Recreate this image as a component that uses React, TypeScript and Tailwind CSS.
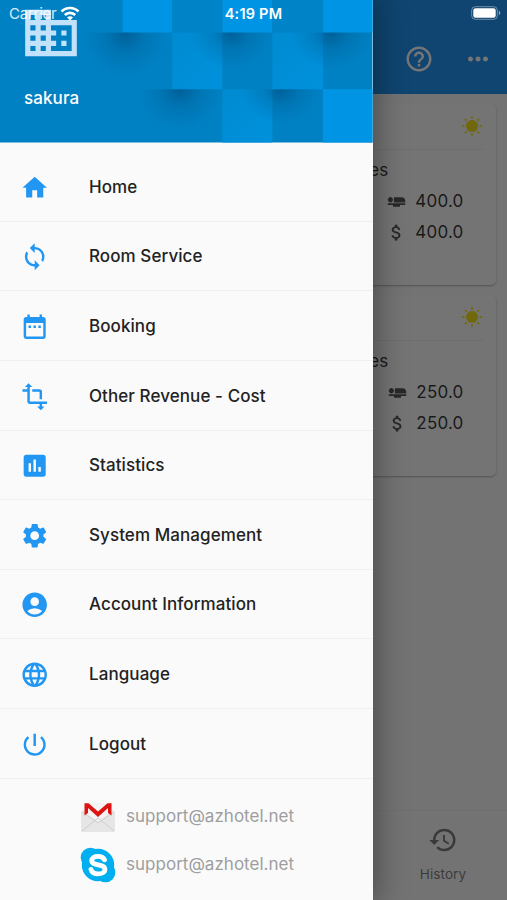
import type { IconType } from "react-icons";
import {
  MdAccountCircle,
  MdAirlineSeatFlat,
  MdAssessment,
  MdAttachMoney,
  MdBusiness,
  MdDateRange,
  MdHelpOutline,
  MdHistory,
  MdHome,
  MdLanguage,
  MdMoreHoriz,
  MdPowerSettingsNew,
  MdSettings,
  MdSync,
  MdTransform,
} from "react-icons/md";

const menu: { label: string; icon: IconType }[] = [
  { label: "Home", icon: MdHome },
  { label: "Room Service", icon: MdSync },
  { label: "Booking", icon: MdDateRange },
  { label: "Other Revenue - Cost", icon: MdTransform },
  { label: "Statistics", icon: MdAssessment },
  { label: "System Management", icon: MdSettings },
  { label: "Account Information", icon: MdAccountCircle },
  { label: "Language", icon: MdLanguage },
  { label: "Logout", icon: MdPowerSettingsNew },
];

function Sun() {
  return (
    <svg viewBox="-12 -12 24 24" className="h-6 w-6" fill="#f7e01a">
      <circle r="6" />
      {[0, 45, 90, 135, 180, 225, 270, 315].map((a) => (
        <path key={a} d="M-1.3 -7.6h2.6L0 -11Z" transform={`rotate(${a})`} />
      ))}
    </svg>
  );
}

function GmailLogo() {
  return (
    <svg viewBox="0 0 34 32" className="h-8 w-[34px]">
      <path d="M0 11 3 8h28l3 3v18a2 2 0 0 1-2 2H2a2 2 0 0 1-2-2Z" fill="#e9e9e9" />
      <path d="M3 2h28v9L17 20 3 11Z" fill="#f4f4f4" />
      <path d="m0 11 17 12 17-12v18a2 2 0 0 1-2 2H2a2 2 0 0 1-2-2Z" fill="#e6e6e6" />
      <path d="M1 30 17 17l16 13M1 11l16 11 16-11" fill="none" stroke="#cdcdcd" strokeWidth="1" />
      <path d="M3.5 14.5V2.2h4L17 10.600l9.500-8.400h4v12.300L27 12V7l-10 9L7 7v5Z" fill="#dd1512" />
    </svg>
  );
}

function SkypeLogo() {
  return (
    <svg viewBox="0 0 36 36" className="h-9 w-9">
      <g fill="#00aff0">
        <circle cx="18" cy="18" r="16.200" />
        <circle cx="10.500" cy="10.500" r="9.800" />
        <circle cx="25.500" cy="25.500" r="9.800" />
      </g>
      <path
        d="M24.500 12.800C23.500 10.200 21.300 9.300 18 9.300c-3.600 0-6.300 1.500-6.300 4.300 0 6 13.200 2.600 13.200 8.800 0 3-3 4.500-6.900 4.500-4 0-6.200-1.500-7-4.500"
        fill="none"
        stroke="#fff"
        strokeWidth="4.800"
        strokeLinecap="round"
      />
    </svg>
  );
}

function HeaderArt() {
  return (
    <svg
      viewBox="0 0 372 142"
      preserveAspectRatio="none"
      className="absolute inset-0 h-full w-full"
    >
      <defs>
        <radialGradient id="shade" cx="0.5" cy="0" r="1" gradientTransform="translate(.25 0) scale(.5 1)">
          <stop offset="0" stopColor="#004a7c" stopOpacity="0.6" />
          <stop offset="0.45" stopColor="#004a7c" stopOpacity="0.22" />
          <stop offset="1" stopColor="#004a7c" stopOpacity="0" />
        </radialGradient>
        <linearGradient id="mid" x1="0" y1="0" x2="1" y2="1">
          <stop offset="0" stopColor="#008bd1" />
          <stop offset="1" stopColor="#0091dc" />
        </linearGradient>
      </defs>
      <path d="M0 0h372v142H0Z" fill="#0081c3" />
      <path d="M122.500 0h49.500v32.500h-49.500ZM222 0h50v32.500h-50ZM322.500 0H372v32.500h-49.500ZM322.500 89H372v53h-49.500Z" fill="#0095e4" />
      <path d="M172 0h50v32.500h-50ZM272 0h50.500v32.500H272Z" fill="#0084c7" />
      <rect x="172" y="32.500" width="50" height="56.500" fill="url(#mid)" />
      <rect x="272" y="32.500" width="50.500" height="56.500" fill="url(#mid)" />
      <rect x="222" y="89" width="50" height="53" fill="url(#mid)" />
      <rect x="83" y="32.500" width="84" height="44" fill="url(#shade)" />
      <rect x="190" y="32.500" width="82" height="36" fill="url(#shade)" />
      <rect x="290" y="32.500" width="82" height="36" fill="url(#shade)" />
      <path d="M137 89h85v40h-85Z" fill="url(#shade)" />
      <rect x="240" y="89" width="80" height="34" fill="url(#shade)" />
    </svg>
  );
}

function RoomCard({ amount, className }: { amount: string; className: string }) {
  return (
    <section
      className={`mr-[11px] ml-2.5 rounded-[5px] bg-[#fdfdfd] shadow-[0_1px_2px_rgba(0,0,0,0.28)] ${className}`}
    >
      <div className="mr-3 ml-3 flex h-[46px] items-center justify-end border-b border-[#f0f0f0] pb-0.5">
        <Sun />
      </div>
      <div className="flex flex-col items-end pr-[32.500px] text-[17px] leading-[31px] tracking-[0.2px] text-black/80">
        <div className="mt-[5px] mr-[75px]">Guest files</div>
        <div className="flex items-center">
          <MdAirlineSeatFlat className="mr-2 size-[21px] text-black/65" />
          {amount}
        </div>
        <div className="flex items-center">
          <MdAttachMoney className="mr-2 size-[21px] text-black/65" />
          {amount}
        </div>
      </div>
    </section>
  );
}

function StatusBar() {
  return (
    <div className="absolute inset-x-0 top-0 grid h-7 grid-cols-3 items-center pr-[6px] pl-[9px] text-[15px] text-white">
      <div className="flex items-center gap-1">
        <span className="tracking-[-0.25px] text-white/85">Carrier</span>
        <svg viewBox="0 0 20 15" className="mb-0.5 h-[15px] w-5" fill="none" stroke="#fff" strokeWidth="2.600">
          <path d="M1.500 5.500a12 12 0 0 1 17 0M4.800 9a7.400 7.400 0 0 1 10.400 0" />
          <path d="M10 14.500 7 11.400a4.200 4.200 0 0 1 6 0Z" fill="#fff" stroke="none" />
        </svg>
      </div>
      <span className="mr-[3px] text-center text-[14.500px] font-semibold tracking-[0.2px]">4:19 PM</span>
      <svg viewBox="0 0 30 14" className="mb-[3px] h-3.5 w-[30px] justify-self-end" fill="#fff">
        <rect x="0.700" y="0.700" width="25.600" height="12.600" rx="3.600" fill="none" stroke="#fff" strokeOpacity="0.4" />
        <rect x="2.300" y="2.300" width="22.400" height="9.400" rx="2.200" />
        <path d="M27.800 4.800c2 .7 2 3.700 0 4.400Z" fillOpacity="0.5" />
      </svg>
    </div>
  );
}

export default function App() {
  return (
    <div className="relative h-[900px] w-[507px] overflow-hidden bg-[#fafafa] font-['Inter',sans-serif]">
      <main className="flex h-full flex-col">
        <header className="flex h-[94px] shrink-0 items-end justify-end gap-[29px] bg-[#2196f3] pr-[14px] pb-5 text-white">
          <MdHelpOutline className="size-[30px]" />
          <MdMoreHoriz className="size-[30px]" />
        </header>
        <RoomCard amount="400.0" className="mt-[10px] h-[181px]" />
        <RoomCard amount="250.0" className="mt-[10px] h-[181px]" />
        <nav className="mt-auto flex h-[90px] justify-end border-t border-[#f2f2f2] text-black/50">
          <div className="flex w-[128px] flex-col items-center pt-[14px]">
            <MdHistory className="size-[30px]" />
            <span className="mt-[9px] text-[13.500px] tracking-[0.1px]">History</span>
          </div>
        </nav>
      </main>

      <div className="absolute inset-0 bg-black/54" />

      <aside className="absolute inset-y-0 left-0 flex w-[372.500px] flex-col bg-[#fafafa] shadow-[0_0_28px_4px_rgba(0,0,0,0.35)]">
        <div className="relative h-[142.500px] shrink-0">
          <HeaderArt />
          <div className="relative pt-[1.500px] pl-5">
            <MdBusiness className="size-[62px] text-[#c2e2fb]" />
            <div className="mt-[22px] ml-1 text-[17px] leading-6 font-medium tracking-[0.1px] text-white">
              sakura
            </div>
          </div>
        </div>
        <ul className="pt-[9.700px]">
          {menu.map(({ label, icon: Icon }) => (
            <li
              key={label}
              className="flex h-[69.620px] items-center border-b border-[#efefef] pt-[2px] pl-[20.300px] text-[17px] font-medium tracking-[0.080px] text-[#222]"
            >
              <Icon className="mr-[39.300px] size-[29.400px] shrink-0 text-[#2196f3]" />
              {label}
            </li>
          ))}
        </ul>
        <div className="flex flex-col gap-3 pt-5 pl-20 text-[17px] tracking-[0.020px] text-[#9e9e9e]">
          <div className="flex h-9 items-center gap-[11px] pl-px">
            <GmailLogo />
            support@azhotel.net
          </div>
          <div className="flex h-9 items-center gap-[10px]">
            <SkypeLogo />
            support@azhotel.net
          </div>
        </div>
      </aside>

      <StatusBar />
    </div>
  );
}
